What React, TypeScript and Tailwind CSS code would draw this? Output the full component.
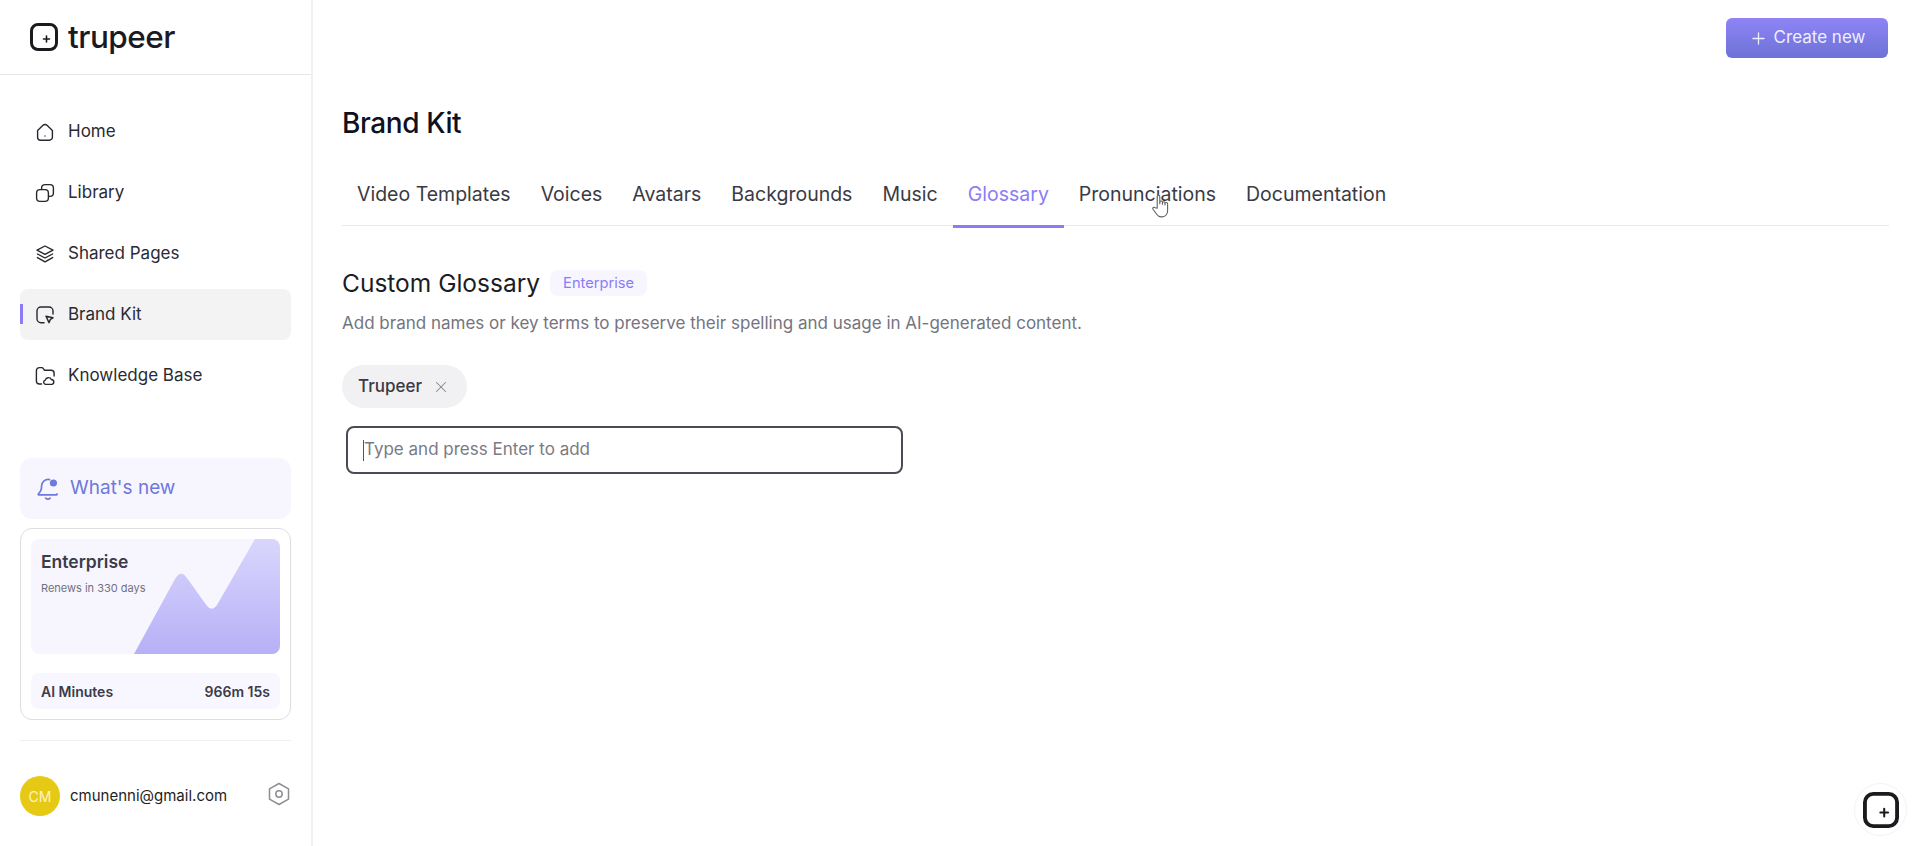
import React from 'react';
import { Plus, X } from 'lucide-react';

const Logo = ({ size = 28 }: { size?: number }) => (
  <svg width={size} height={size} viewBox="0.5 0.5 28 28" fill="none">
    <rect x="2" y="2" width="25" height="25" rx="6.5" stroke="#1b1b1f" strokeWidth="3" />
    <path d="M17 13.5v6M14 16.5h6" stroke="#1b1b1f" strokeWidth="1.6" strokeLinecap="round" />
  </svg>
);

const HomeIcon = () => (
  <svg width="20" height="20" viewBox="0 0 20 20" fill="none" stroke="#27272f" strokeWidth="1.4" strokeLinejoin="round">
    <path d="M2.6 8.6 8 3.3a2.8 2.8 0 0 1 4 0l5.4 5.3v6.6a3 3 0 0 1-3 3H5.6a3 3 0 0 1-3-3z" />
    <circle cx="10" cy="14" r="0.7" fill="#27272f" stroke="none" />
  </svg>
);

const LibraryIcon = () => (
  <svg width="20" height="20" viewBox="0 0 20 20" fill="none" stroke="#27272f" strokeWidth="1.4">
    <rect x="1.6" y="6.6" width="11.8" height="11.8" rx="3.4" />
    <path d="M6.6 6.4V5a3.4 3.4 0 0 1 3.4-3.4h5A3.4 3.4 0 0 1 18.4 5v5a3.4 3.4 0 0 1-3.4 3.4h-1.5" />
  </svg>
);

const LayersIcon = () => (
  <svg width="20" height="20" viewBox="0 0 20 20" fill="none" stroke="#27272f" strokeWidth="1.4" strokeLinejoin="round" strokeLinecap="round">
    <path d="M10 2 18 6.2 10 10.4 2 6.2z" />
    <path d="M2.4 10 10 14l7.6-4" />
    <path d="M2.4 13.6 10 17.8l7.6-4.2" />
  </svg>
);

const BrandIcon = () => (
  <svg width="20" height="20" viewBox="0 0 20 20" fill="none" stroke="#27272f" strokeWidth="1.4" strokeLinejoin="round" strokeLinecap="round">
    <path d="M9 17.8H6a4 4 0 0 1-4-4V6a4 4 0 0 1 4-4h8a4 4 0 0 1 4 4v3" />
    <path d="M11 11.2l7 1.6-2.6 1.6-1.4 3.2z" />
  </svg>
);

const FolderIcon = () => (
  <svg width="20" height="20" viewBox="0 0 20 20" fill="none" stroke="#27272f" strokeWidth="1.4" strokeLinejoin="round" strokeLinecap="round">
    <path d="M6.5 18H4.4a3 3 0 0 1-3-3V4.6a3 3 0 0 1 3-3h3l2.2 2.6h6.5a3 3 0 0 1 3 3V10" />
    <path d="M10.6 18.4a2.2 2.2 0 0 1-.3-4.3 3.2 3.2 0 0 1 6-.6 2.5 2.5 0 0 1 .7 4.9z" />
  </svg>
);

const BellIcon = () => (
  <svg width="24" height="24" viewBox="0 0 24 24" fill="none" stroke="#6f78dc" strokeWidth="1.7" strokeLinecap="round" strokeLinejoin="round">
    <path d="M13.5 2.6A6.6 6.6 0 0 0 5.6 9c0 4.4-1.3 6.2-3.2 7.8-.4.4-.2 1 .4 1h17.6c.6 0 .8-.4.6-.8" />
    <path d="M9.6 21.2c1.3 1.1 3.3 1.1 4.6 0" />
    <circle cx="17.4" cy="6" r="3.6" fill="#6f78dc" stroke="none" />
  </svg>
);

const GearIcon = () => (
  <svg width="22" height="24" viewBox="0 0 22 24" fill="none" stroke="#8d8d94" strokeWidth="1.5" strokeLinejoin="round">
    <path d="M11 1.5 20.5 6.8v10.4L11 22.5 1.5 17.2V6.8z" />
    <circle cx="11" cy="12" r="3.2" />
  </svg>
);

const navItems = [
  { label: 'Home', icon: <HomeIcon /> },
  { label: 'Library', icon: <LibraryIcon /> },
  { label: 'Shared Pages', icon: <LayersIcon /> },
  { label: 'Brand Kit', icon: <BrandIcon />, active: true },
  { label: 'Knowledge Base', icon: <FolderIcon /> },
];

const tabs = ['Video Templates', 'Voices', 'Avatars', 'Backgrounds', 'Music', 'Glossary', 'Pronunciations', 'Documentation'];

const Sidebar = () => (
  <aside className="w-[313px] shrink-0 h-full border-r-2 border-[#f1f1f3] flex flex-col">
    <div className="h-[75px] shrink-0 border-b border-[#e6e6e9] pl-[30px] flex items-center gap-[10px]">
      <Logo size={28} />
      <span className="text-[31.5px] leading-none font-medium tracking-[-0.5px] text-[#1b1b1f] pb-[1px]">trupeer</span>
    </div>

    <nav className="mt-[31px] px-[20px] flex flex-col gap-[10px]">
      {navItems.map((item) => (
        <div
          key={item.label}
          className={`relative h-[51px] rounded-lg flex items-center gap-[13px] pl-[15px] ${item.active ? 'bg-[#f3f3f4]' : ''}`}
        >
          {item.active && <span className="absolute left-0 top-[15px] h-[20px] w-[3px] bg-[#8b7cf6]" />}
          {item.icon}
          <span className="text-[17px] text-[#2a2a33]">{item.label}</span>
        </div>
      ))}
    </nav>

    <div className="mt-[57px] mx-[20px] h-[61px] rounded-xl bg-[#f7f6ff] flex items-center gap-[10px] pl-[16px]">
      <BellIcon />
      <span className="text-[19px] text-[#6f78dc]">What's new</span>
    </div>

    <div className="mt-[9px] mx-[20px] h-[192px] rounded-xl border border-[#dedee2] p-[10px] flex flex-col justify-between">
      <div className="relative h-[115px] rounded-lg bg-[#f7f6ff] overflow-hidden pl-[10px] pt-[12px]">
        <svg className="absolute inset-0" width="250" height="115" viewBox="0 0 250 115">
          <defs>
            <linearGradient id="chart" x1="0" y1="0" x2="0" y2="1">
              <stop offset="0" stopColor="#d9d6fc" />
              <stop offset="1" stopColor="#b7b0f7" />
            </linearGradient>
          </defs>
          <path d="M103 115 L144 40 Q150 30 156 39 L176 67 Q181 73 186 66 L224 0 H250 V115 Z" fill="url(#chart)" />
        </svg>
        <div className="relative text-[17.5px] leading-[22px] font-semibold text-[#3b3b4a]">Enterprise</div>
        <div className="relative mt-[8px] text-[11px] leading-[14px] text-[#71717f]">Renews in 330 days</div>
      </div>
      <div className="h-[36px] rounded-lg bg-[#f8f7ff] flex items-center justify-between px-[10px] text-[14px] font-semibold text-[#3b3b4a]">
        <span>AI Minutes</span>
        <span>966m 15s</span>
      </div>
    </div>

    <div className="mt-[20px] mx-[20px] border-t border-[#f0f0f2]" />

    <div className="mt-[35px] mx-[20px] flex items-center">
      <div className="w-[40px] h-[40px] rounded-full bg-[#e6c914] flex items-center justify-center text-[14px] text-[#fdf6c4]">CM</div>
      <span className="ml-[10px] text-[15px] text-[#1d1d24]">cmunenni@gmail.com</span>
      <span className="ml-auto -mt-[4px] mr-[1px]"><GearIcon /></span>
    </div>
  </aside>
);

const Main = () => (
  <main className="relative flex-1 h-full pl-[29px] pr-[31px]">
    <div className="flex justify-end pt-[18px]">
      <button className="mr-[1px] w-[162px] h-[40px] rounded-md bg-gradient-to-b from-[#8f84f6] to-[#6c72d6] flex items-center justify-center gap-[6px] text-[17px] text-[#eef0ff]">
        <Plus size={19} strokeWidth={1.6} />
        Create new
      </button>
    </div>

    <h1 className="mt-[47px] text-[28px] leading-[36px] font-medium tracking-[-0.4px] text-[#0f1020]">Brand Kit</h1>

    <div className="mt-[32px] h-[53px] border-b border-[#e8e8eb] flex">
      {tabs.map((tab) => (
        <div
          key={tab}
          className={`h-[55px] px-[15px] pt-[7px] text-[19.5px] leading-[28px] ${tab === 'Glossary' ? 'border-b-[3px] border-[#8b7cf6] text-[#8b7cf6]' : 'text-[#3a3a44]'}`}
        >
          {tab}
        </div>
      ))}
    </div>

    <div className="mt-[41px] flex items-center gap-[10px]">
      <h2 className="text-[24.5px] leading-[32px] text-[#1c1c24]">Custom Glossary</h2>
      <span className="h-[26px] px-[13px] rounded-lg bg-[#f7f6ff] text-[14.7px] leading-[26px] text-[#8b7cf6]">Enterprise</span>
    </div>

    <p className="mt-[12px] text-[17px] leading-[24px] text-[#74747e]">
      Add brand names or key terms to preserve their spelling and usage in AI-generated content.
    </p>

    <div className="mt-[30px] w-[125px] h-[43px] rounded-full bg-[#f1f1f4] flex items-center pl-[16px] gap-[10px]">
      <span className="text-[17px] font-medium text-[#3a3a44]">Trupeer</span>
      <X size={18} strokeWidth={1.4} className="text-[#85858e]" />
    </div>

    <div className="mt-[18px] ml-[4px] w-[557px] h-[48px] rounded-lg border-2 border-[#4b4b55] flex items-center pl-[15px]">
      <span className="w-[1px] h-[21px] bg-[#55555e]" />
      <span className="text-[17px] text-[#7a7a84]">Type and press Enter to add</span>
    </div>

    <svg className="absolute left-[837px] top-[193px]" width="22" height="26" viewBox="0 0 20 24" fill="#fff" stroke="#5c5c64" strokeWidth="1" strokeLinejoin="round">
      <path d="M6.5 14V3.2a1.2 1.2 0 0 1 2.4 0V10V8.6a1.2 1.2 0 0 1 2.4 0V10.4V9.2a1.2 1.2 0 0 1 2.4 0V11V10a1.2 1.2 0 0 1 2.4 0v6.4c0 3-2 5.6-5 5.6H10c-2 0-3-1-4-2.4L2.6 15c-.8-1.2.8-2.6 2-1.4z" />
    </svg>

    <div className="absolute right-[13px] bottom-[10px] w-[53px] h-[53px] rounded-full border border-[#f3f3f5] bg-white flex items-center justify-center">
      <Logo size={36} />
    </div>
  </main>
);

export default function App() {
  return (
    <div className="flex w-full h-[846px] bg-white overflow-hidden font-['Inter',sans-serif]">
      <Sidebar />
      <Main />
    </div>
  );
}
